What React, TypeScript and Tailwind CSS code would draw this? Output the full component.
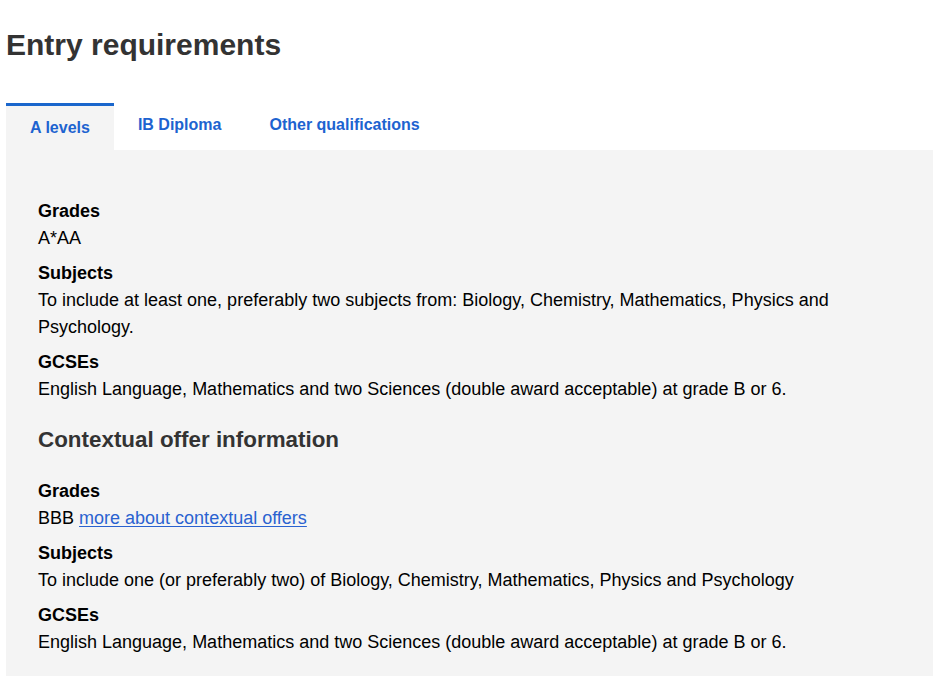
const tabs = ['A levels', 'IB Diploma', 'Other qualifications'];

type Req = { label: string; value: React.ReactNode };

const main: Req[] = [
  { label: 'Grades', value: 'A*AA' },
  {
    label: 'Subjects',
    value:
      'To include at least one, preferably two subjects from: Biology, Chemistry, Mathematics, Physics and Psychology.',
  },
  {
    label: 'GCSEs',
    value:
      'English Language, Mathematics and two Sciences (double award acceptable) at grade B or 6.',
  },
];

const contextual: Req[] = [
  {
    label: 'Grades',
    value: (
      <>
        BBB{' '}
        <a href="#" className="text-[#2a62d0] underline underline-offset-2">
          more about contextual offers
        </a>
      </>
    ),
  },
  {
    label: 'Subjects',
    value:
      'To include one (or preferably two) of Biology, Chemistry, Mathematics, Physics and Psychology',
  },
  {
    label: 'GCSEs',
    value:
      'English Language, Mathematics and two Sciences (double award acceptable) at grade B or 6.',
  },
];

function ReqList({ items }: { items: Req[] }) {
  return (
    <dl>
      {items.map((item) => (
        <div key={item.label} className="mb-2 text-[18px] leading-[27px] text-black">
          <dt className="font-bold">{item.label}</dt>
          <dd className="pr-[70px]">{item.value}</dd>
        </div>
      ))}
    </dl>
  );
}

export default function App() {
  const active = 0;
  return (
    <div className="min-h-screen bg-white pl-[6px] font-['Liberation_Sans',Arial,sans-serif]">
      <h1 className="pt-[27px] text-[30px] leading-[36px] font-bold text-[#333]">
        Entry requirements
      </h1>

      <div className="mt-[40px] flex items-start">
        {tabs.map((tab, i) => (
          <button
            key={tab}
            className={
              i === active
                ? 'border-t-[3px] border-[#1a66cc] bg-[#f4f4f4] px-6 pt-[12px] pb-[12px] text-[16px] leading-[20px] font-bold text-[#1d63d0]'
                : 'px-6 pt-[12px] pb-[12px] text-[16px] leading-[20px] font-bold text-[#1d63d0]'
            }
          >
            {tab}
          </button>
        ))}
      </div>

      <div className="bg-[#f4f4f4] pl-[32px] pt-[48px] pb-[32px]">
        <ReqList items={main} />
        <h2 className="mt-[23px] mb-[24px] text-[22.4px] leading-[28px] font-bold text-[#333]">
          Contextual offer information
        </h2>
        <ReqList items={contextual} />
      </div>
    </div>
  );
}
